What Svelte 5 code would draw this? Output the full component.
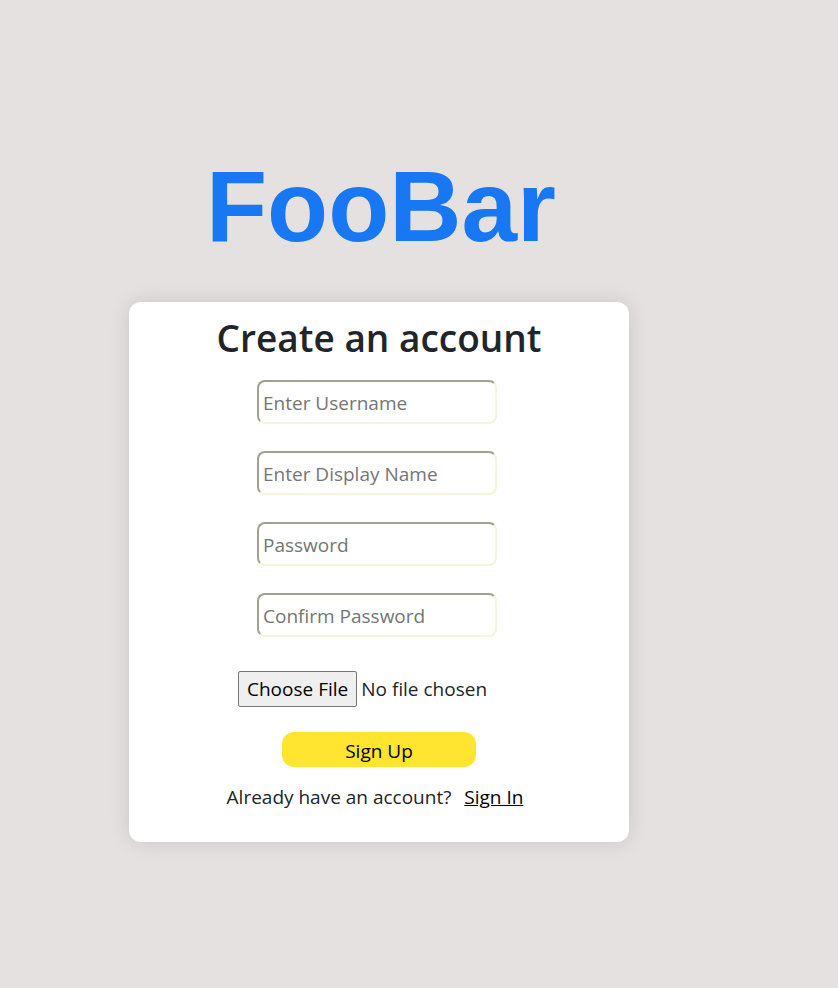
<script>
  const fields = [
    { id: 'username', type: 'text', label: 'Enter Username' },
    { id: 'display-name', type: 'text', label: 'Enter Display Name' },
    { id: 'password', type: 'password', label: 'Password' },
    { id: 'confirm-password', type: 'password', label: 'Confirm Password' }
  ];
</script>

<main class="page">
  <h1 class="brand">FooBar</h1>
  <form class="card" onsubmit={(event) => event.preventDefault()}>
    <h2 class="title">Create an account</h2>
    <div class="fields">
      {#each fields as field (field.id)}
        <input class="field" id={field.id} type={field.type} placeholder={field.label} aria-label={field.label} />
      {/each}
    </div>
    <input class="upload" type="file" aria-label="Profile picture" />
    <button class="submit" type="submit">Sign Up</button>
    <p class="signin">Already have an account? <a href="#signin">Sign In</a></p>
  </form>
</main>

<style>
  :global(body) {
    margin: 0;
    background: #e5e1e0;
  }

  .page {
    box-sizing: border-box;
    min-height: 100vh;
    padding: 146px 80px 0 0;
    display: flex;
    flex-direction: column;
    align-items: center;
    font-family: "Segoe UI", "Open Sans", "Noto Sans", sans-serif;
    font-size: 19px;
    line-height: 30px;
    color: #212529;
  }

  .brand {
    margin: 0 0 36px;
    padding-left: 4px;
    font: bold 100px/120px Arial, "Liberation Sans", sans-serif;
    color: #1877f2;
  }

  .card {
    box-sizing: border-box;
    width: 100%;
    max-width: 500px;
    padding: 12px 0 30px;
    display: flex;
    flex-direction: column;
    align-items: center;
    border-radius: 12px;
    background: #fff;
    box-shadow: 0 0 20px rgba(0, 0, 0, 0.12);
  }

  .title {
    margin: 0 0 18px;
    font-size: 37px;
    font-weight: 600;
    line-height: 48px;
  }

  .fields {
    display: flex;
    flex-direction: column;
    gap: 27px;
    margin: 0 4px 34px 0;
  }

  .field {
    box-sizing: border-box;
    width: 240px;
    height: 44px;
    padding: 2px 4px 0;
    border: 2px inset beige;
    border-radius: 8px;
    background: #fff;
    font: inherit;
    color: #212529;
  }

  .field::placeholder {
    color: #757575;
    opacity: 1;
  }

  .upload {
    width: 282px;
    margin-bottom: 25px;
    font: inherit;
    color: #212529;
  }

  .upload::file-selector-button {
    box-sizing: border-box;
    height: 36px;
    padding: 0 8px;
    border: 1px solid #767676;
    border-radius: 2px;
    background: #efefef;
    font: inherit;
    color: #000;
  }

  .submit {
    width: 194px;
    height: 35px;
    margin: 0 0 15px;
    padding: 2px 0 0;
    border: 0;
    border-radius: 12px;
    background: #ffe430;
    font: inherit;
    color: #000;
  }

  .signin {
    margin: 0 8px 0 0;
  }

  .signin a {
    margin-left: 8px;
    color: #000;
  }
</style>
